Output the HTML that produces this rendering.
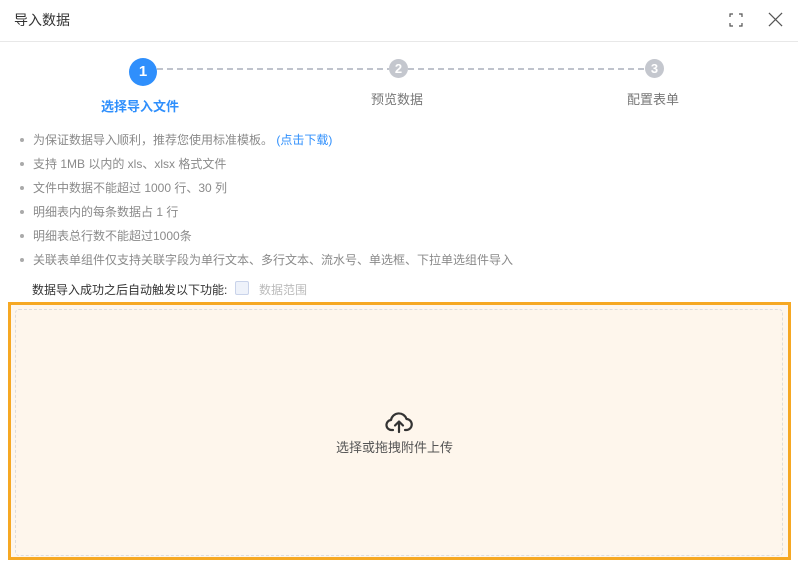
<!DOCTYPE html>
<html><head><meta charset="utf-8"><style>
*{margin:0;padding:0;box-sizing:border-box}
body{width:798px;height:567px;background:#fff;font-family:"Liberation Sans","Noto Sans CJK SC",sans-serif;position:relative;overflow:hidden}
.a{position:absolute;white-space:nowrap}
.hd{left:14px;top:10px;font-size:14px;color:#333}
.line{left:0;top:41px;width:798px;height:1px;background:#e8e8e8}
.c{position:absolute;border-radius:50%;color:#fff;text-align:center;font-weight:bold}
li{position:absolute;left:20px;font-size:12px;color:#8a8a8a;list-style:none;white-space:nowrap}
li:before{content:"";position:absolute;left:0;top:7px;width:4px;height:4px;border-radius:50%;background:#aaa}
li span.t{margin-left:13px}
</style></head><body>
<div class="a hd">导入数据</div>
<svg class="a" style="left:729px;top:13px" width="14" height="14" viewBox="0 0 14 14" fill="none" stroke="#555" stroke-width="1.2"><path d="M1 4V1h3M10 1h3v3M13 10v3h-3M4 13H1v-3"/></svg>
<svg class="a" style="left:768px;top:12px" width="15" height="15" viewBox="0 0 16 16" stroke="#555" stroke-width="1.3"><path d="M1 1L15 15M15 1L1 15"/></svg>
<div class="a line"></div>
<svg class="a" style="left:0;top:60px" width="798" height="20"><line x1="157" y1="9" x2="389" y2="9" stroke="#bfc3cc" stroke-width="2" stroke-dasharray="6,4"/><line x1="408" y1="9" x2="645" y2="9" stroke="#bfc3cc" stroke-width="2" stroke-dasharray="6,4"/></svg>
<div class="c" style="left:129px;top:58px;width:28px;height:28px;background:#2f8ffc;font-size:15px;line-height:28px">1</div>
<div class="c" style="left:389px;top:59px;width:19px;height:19px;background:#c4c7ce;font-size:13px;line-height:19px">2</div>
<div class="c" style="left:645px;top:59px;width:19px;height:19px;background:#c4c7ce;font-size:13px;line-height:19px">3</div>
<div class="a" style="left:101px;top:96px;font-size:13px;color:#2f8ffc;font-weight:bold">选择导入文件</div>
<div class="a" style="left:371px;top:89px;font-size:13px;color:#777">预览数据</div>
<div class="a" style="left:627px;top:89px;font-size:13px;color:#777">配置表单</div>
<ul>
<li style="top:131px"><span class="t">为保证数据导入顺利，推荐您使用标准模板。 <span style="color:#2f8ffc">(点击下载)</span></span></li>
<li style="top:155px"><span class="t">支持 1MB 以内的 xls、xlsx 格式文件</span></li>
<li style="top:179px"><span class="t">文件中数据不能超过 1000 行、30 列</span></li>
<li style="top:203px"><span class="t">明细表内的每条数据占 1 行</span></li>
<li style="top:227px"><span class="t">明细表总行数不能超过1000条</span></li>
<li style="top:251px"><span class="t">关联表单组件仅支持关联字段为单行文本、多行文本、流水号、单选框、下拉单选组件导入</span></li>
</ul>
<div class="a" style="left:32px;top:281px;font-size:12px;color:#333">数据导入成功之后自动触发以下功能:</div>
<div class="a" style="left:235px;top:281px;width:14px;height:14px;border:1px solid #c9d3ea;background:#eef2fa;border-radius:2px"></div>
<div class="a" style="left:259px;top:281px;font-size:12px;color:#bbb">数据范围</div>
<div class="a" style="left:8px;top:302px;width:783px;height:258px;border:3px solid #f6a823;background:#fef6ec"></div>
<div class="a" style="left:15px;top:309px;width:768px;height:247px;border:1px dashed #ddd;border-radius:4px"></div>
<svg class="a" style="left:385px;top:410px" width="28" height="24" viewBox="0 0 28 24" fill="none" stroke="#333" stroke-width="2.2" stroke-linecap="round" stroke-linejoin="round"><path d="M8 20H7a5 5 0 0 1-1-10 8 8 0 0 1 15.5-1A5.5 5.5 0 0 1 21 20h-1"/><path d="M14 22V12M10 15.5l4-4 4 4"/></svg>
<div class="a" style="left:336px;top:437px;font-size:13px;color:#555">选择或拖拽附件上传</div>
</body></html>
